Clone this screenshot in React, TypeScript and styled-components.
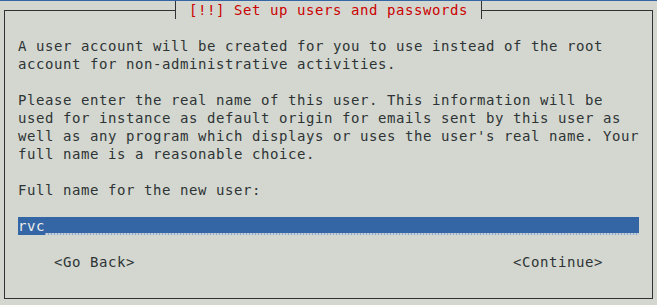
import styled, { createGlobalStyle } from "styled-components";

const GlobalStyle = createGlobalStyle`
  html, body {
    margin: 0;
    padding: 0;
    background: #d3d7cf;
  }
  body {
    font-family: "DejaVu Sans Mono", "Liberation Mono", monospace;
    font-size: 14px;
    letter-spacing: 0.57px;
    color: #2e3436;
  }
`;

const App: React.FC = () => {
  return (
    <>
      <GlobalStyle />
      <Screen>
        <Frame>
          <Title>[!!] Set up users and passwords</Title>
          <Body>
            <Paragraph>
              {"A user account will be created for you to use instead of the root\naccount for non-administrative activities."}
            </Paragraph>
            <Paragraph>
              {"Please enter the real name of this user. This information will be\nused for instance as default origin for emails sent by this user as\nwell as any program which displays or uses the user's real name. Your\nfull name is a reasonable choice."}
            </Paragraph>
            <Paragraph>Full name for the new user:</Paragraph>
            <Input>
              <InputValue>rvc</InputValue>
              <InputRest />
            </Input>
          </Body>
          <Buttons>
            <Button>&lt;Go Back&gt;</Button>
            <Button>&lt;Continue&gt;</Button>
          </Buttons>
        </Frame>
      </Screen>
    </>
  );
};

const Screen = styled.div`
  width: 657px;
  height: 305px;
  box-sizing: border-box;
  border-top: 1px solid #3465a4;
  overflow: hidden;
`;

const Frame = styled.div`
  margin: 9px 4px 0 4px;
  width: 649px;
  height: 289px;
  box-sizing: border-box;
  border: 1px solid #2e3436;
  display: flex;
  flex-direction: column;
`;

const Title = styled.div`
  align-self: flex-start;
  margin: -10px 0 0 170px;
  height: 18px;
  line-height: 18px;
  padding: 0 13px;
  border-left: 1px solid #2e3436;
  border-right: 1px solid #2e3436;
  background: #d3d7cf;
  color: #cc0000;
  white-space: pre;
`;

const Body = styled.div`
  padding: 18px 0 0 13px;
  display: flex;
  flex-direction: column;
  gap: 18px;
`;

const Paragraph = styled.div`
  line-height: 18px;
  white-space: pre;
`;

const Input = styled.div`
  width: 621px;
  height: 18px;
  display: flex;
  background: #3465a4;
  color: #eeeeec;
`;

const InputValue = styled.span`
  line-height: 18px;
`;

const InputRest = styled.span`
  flex: 1;
  align-self: flex-end;
  height: 2px;
  background-color: #c5cdd6;
  background-image: repeating-linear-gradient(
    90deg,
    #8fa9cf 0 1px,
    transparent 1px 3px
  );
`;

const Buttons = styled.div`
  margin-top: 18px;
  padding: 0 49px;
  display: flex;
  justify-content: space-between;
`;

const Button = styled.span`
  line-height: 18px;
  white-space: pre;
`;

export default App;
